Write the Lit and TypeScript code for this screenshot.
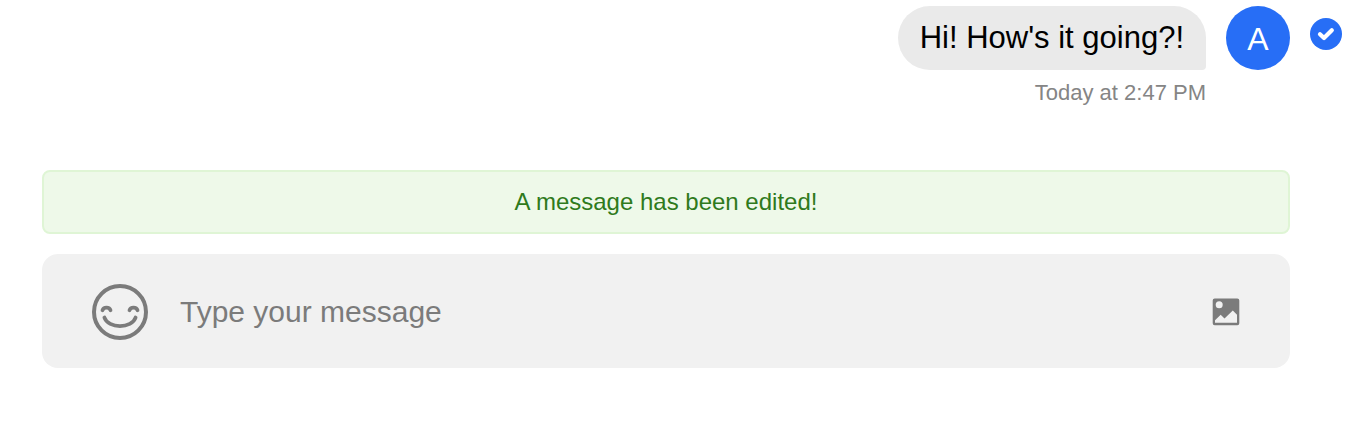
import { LitElement, html, css } from "lit";
import { customElement, property, state } from "lit/decorators.js";

@customElement("chat-message")
class ChatMessage extends LitElement {
  @property() text = "";
  @property() time = "";
  @property() initial = "";

  static styles = css`
    :host {
      display: block;
    }
    .row {
      display: flex;
      justify-content: flex-end;
      align-items: flex-start;
      gap: 20px;
    }
    .body {
      display: flex;
      flex-direction: column;
      align-items: flex-end;
    }
    .bubble {
      padding: 14px 22px;
      border-radius: 32px 32px 4px 32px;
      background: #eaeaea;
      color: #000;
      font-size: 31px;
      line-height: 36px;
    }
    .time {
      margin-top: 8px;
      color: #858585;
      font-size: 22px;
      line-height: 30px;
    }
    .avatar {
      width: 64px;
      height: 64px;
      border-radius: 50%;
      background: #276ef6;
      color: #fff;
      font-size: 32px;
      line-height: 66px;
      text-align: center;
    }
    .status {
      display: block;
      width: 32px;
      height: 32px;
      margin-top: 12px;
    }
  `;

  render() {
    return html`
      <div class="row">
        <div class="body">
          <div class="bubble">${this.text}</div>
          <time class="time">${this.time}</time>
        </div>
        <div class="avatar">${this.initial}</div>
        <svg class="status" viewBox="0 0 32 32" role="img" aria-label="Delivered">
          <circle cx="16" cy="16" r="16" fill="#276ef6" />
          <path
            d="M10 16.2 14 20 21.800 12.200"
            fill="none"
            stroke="#fff"
            stroke-width="4.200"
            stroke-linecap="round"
            stroke-linejoin="round"
          />
        </svg>
      </div>
    `;
  }
}

@customElement("message-composer")
class MessageComposer extends LitElement {
  @state() private draft = "";

  static styles = css`
    :host {
      display: block;
    }
    .box {
      display: flex;
      align-items: center;
      padding: 30px 48px 28px;
      border-radius: 16px;
      background: #f1f1f1;
    }
    .icon-button {
      display: flex;
      flex: none;
      padding: 0;
      border: 0;
      background: none;
      color: #7b7b7b;
      cursor: pointer;
    }
    .emoji {
      width: 60px;
      height: 56px;
    }
    .picture {
      width: 32px;
      height: 32px;
    }
    .field {
      flex: 1;
      min-width: 0;
      height: 40px;
      margin: 0 30px;
      padding: 0;
      border: 0;
      outline: 0;
      background: none;
      color: #000;
      font-family: inherit;
      font-size: 30px;
      line-height: 40px;
    }
    .field::placeholder {
      color: #7b7b7b;
      opacity: 1;
    }
  `;

  private onInput(e: Event) {
    this.draft = (e.target as HTMLInputElement).value;
  }

  render() {
    return html`
      <form class="box" @submit=${(e: Event) => e.preventDefault()}>
        <button class="icon-button" type="button" aria-label="Emoji picker">
          <svg class="emoji" viewBox="0 0 60 56" fill="none" stroke="currentColor" stroke-linecap="round">
            <circle cx="30" cy="28" r="26" stroke-width="4" />
            <path d="M12.500 26.300C13.600 22.600 19.400 22.600 20.500 26.300M39.500 26.300C40.600 22.600 46.400 22.600 47.500 26.300" stroke-width="3.800" />
            <path d="M14.400 33.500C18 44.900 42 44.900 45.600 33.500" stroke-width="3.800" />
          </svg>
        </button>
        <input
          class="field"
          type="text"
          aria-label="Message"
          placeholder="Type your message"
          .value=${this.draft}
          @input=${this.onInput}
        />
        <button class="icon-button" type="button" aria-label="Attach picture">
          <svg class="picture" viewBox="0 0 32 32">
            <path
              fill="currentColor"
              fill-rule="evenodd"
              d="M4.700 2.600H27.300A2 2 0 0 1 29.300 4.600V27.300A2 2 0 0 1 27.300 29.300H4.700A2 2 0 0 1 2.700 27.300V4.600A2 2 0 0 1 4.700 2.600ZM9.200 5.300A3.500 3.500 0 1 0 9.200 12.300A3.500 3.500 0 1 0 9.200 5.300ZM5 26.700H27V18.800L22.800 14.600L14.500 22.600L10.700 18.700L5 24.200Z"
            />
          </svg>
        </button>
      </form>
    `;
  }
}

@customElement("app-root")
class AppRoot extends LitElement {
  static styles = css`
    :host {
      display: block;
      background: #fff;
      font-family: "Liberation Sans", Arial, sans-serif;
    }
    .messages {
      padding: 6px 10px 0;
    }
    .footer {
      display: flex;
      flex-direction: column;
      gap: 20px;
      padding: 62px 62px 56px 42px;
    }
    .notice {
      padding: 14px;
      border: 2px solid #dff5d5;
      border-radius: 8px;
      background: #eef9e9;
      color: #2f7a1c;
      font-size: 24px;
      line-height: 32px;
      text-align: center;
    }
  `;

  render() {
    return html`
      <main>
        <section class="messages">
          <chat-message text="Hi! How's it going?!" time="Today at 2:47 PM" initial="A"></chat-message>
        </section>
        <section class="footer">
          <div class="notice" role="status">A message has been edited!</div>
          <message-composer></message-composer>
        </section>
      </main>
    `;
  }
}
